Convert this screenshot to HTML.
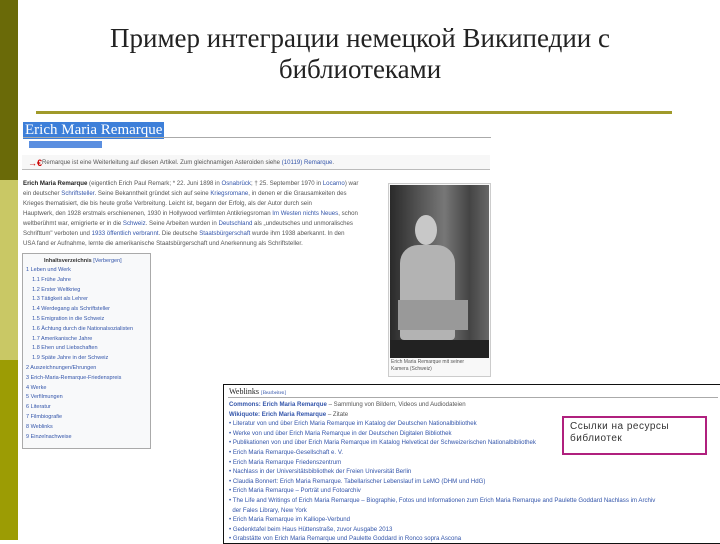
<!DOCTYPE html>
<html><head><meta charset="utf-8"><style>
*{margin:0;padding:0;box-sizing:border-box}
body{width:720px;height:540px;position:relative;background:#fff;overflow:hidden;font-family:"Liberation Sans",sans-serif}
.a{position:absolute}
.t{font-family:"Liberation Serif","Noto Serif CJK SC",serif;font-size:27px;color:#222;text-align:center;width:720px;left:0;line-height:31px}
.s{font-size:6.1px;color:#555;white-space:nowrap;line-height:10px}
.b{color:#3355aa}
.l{font-size:5.5px;color:#3355aa;white-space:nowrap;line-height:9.8px}
.w{font-size:6.1px;color:#3355aa;white-space:nowrap;line-height:9.6px}
</style></head><body>
<div class="a" style="left:0;top:0;width:18px;height:180px;background:#6a6a08"></div>
<div class="a" style="left:0;top:180px;width:18px;height:180px;background:#c9c865"></div>
<div class="a" style="left:0;top:360px;width:18px;height:180px;background:#9c9c04"></div>
<div class="a t" style="top:23px;left:0">Пример интеграции немецкой Википедии с<br>библиотеками</div>
<div class="a" style="left:36px;top:111px;width:636px;height:3px;background:#a09a2a"></div>

<div class="a" style="left:23px;top:122px;font-family:'Liberation Serif',serif;font-size:15px;color:#fff;background:#3d7fd9;padding:0 2px;line-height:17px">Erich Maria Remarque</div>
<div class="a" style="left:23px;top:137px;width:468px;height:1px;background:#aaa"></div>
<div class="a" style="left:29px;top:141px;width:73px;height:7px;background:#5b8fe0"></div>
<div class="a" style="left:22px;top:155px;width:468px;height:15px;background:#f7f7f7;border-bottom:1px solid #bbb"></div>
<div class="a" style="left:28px;top:160px;color:#c00;font-size:9px;line-height:7px;font-weight:bold">→€</div>
<div class="a s" style="left:42px;top:158px">Remarque ist eine Weiterleitung auf diesen Artikel. Zum gleichnamigen Asteroiden siehe <span class="b">(10119) Remarque</span>.</div>
<div class="a s" style="left:23px;top:179px">
<b style="color:#222">Erich Maria Remarque</b> (eigentlich Erich Paul Remark; * 22. Juni 1898 in <span class="b">Osnabrück</span>; † 25. September 1970 in <span class="b">Locarno</span>) war<br>
ein deutscher <span class="b">Schriftsteller</span>. Seine Bekanntheit gründet sich auf seine <span class="b">Kriegsromane</span>, in denen er die Grausamkeiten des<br>
Krieges thematisiert, die bis heute große Verbreitung. Leicht ist, begann der Erfolg, als der Autor durch sein<br>
Hauptwerk, den 1928 erstmals erschienenen, 1930 in Hollywood verfilmten Antikriegsroman <span class="b">Im Westen nichts Neues</span>, schon<br>
weltberühmt war, emigrierte er in die <span class="b">Schweiz</span>. Seine Arbeiten wurden in <span class="b">Deutschland</span> als „undeutsches und unmoralisches<br>
Schrifttum" verboten und <span class="b">1933 öffentlich verbrannt</span>. Die deutsche <span class="b">Staatsbürgerschaft</span> wurde ihm 1938 aberkannt. In den<br>
USA fand er Aufnahme, lernte die amerikanische Staatsbürgerschaft und Anerkennung als Schriftsteller.</div>

<div class="a" style="left:388px;top:183px;width:103px;height:194px;background:#f8f8f8;border:1px solid #ccc"></div>
<div class="a" style="left:390px;top:185px;width:99px;height:173px;background:linear-gradient(90deg,#2a2a2a,#555 30%,#777 55%,#444 80%,#666)"></div>
<div class="a" style="left:415px;top:215px;width:22px;height:30px;border-radius:50%;background:#c8c8c8"></div>
<div class="a" style="left:400px;top:245px;width:55px;height:95px;border-radius:18px 18px 4px 4px;background:#b3b3b3"></div>
<div class="a" style="left:398px;top:300px;width:70px;height:30px;background:#999"></div>
<div class="a" style="left:390px;top:340px;width:99px;height:18px;background:#222"></div>
<div class="a s" style="left:391px;top:359px;font-size:5px;line-height:7px">Erich Maria Remarque mit seiner<br>Kamera (Schweiz)</div>

<div class="a" style="left:22px;top:253px;width:129px;height:196px;background:#f8f9fa;border:1px solid #aaa"></div>
<div class="a s" style="left:44px;top:256px;font-weight:bold;color:#333;font-size:5.5px">Inhaltsverzeichnis <span class="b" style="font-weight:normal">[Verbergen]</span></div>
<div class="a l" style="left:26px;top:266px">1 Leben und Werk<br>&nbsp;&nbsp;&nbsp;&nbsp;1.1 Frühe Jahre<br>&nbsp;&nbsp;&nbsp;&nbsp;1.2 Erster Weltkrieg<br>&nbsp;&nbsp;&nbsp;&nbsp;1.3 Tätigkeit als Lehrer<br>&nbsp;&nbsp;&nbsp;&nbsp;1.4 Werdegang als Schriftsteller<br>&nbsp;&nbsp;&nbsp;&nbsp;1.5 Emigration in die Schweiz<br>&nbsp;&nbsp;&nbsp;&nbsp;1.6 Ächtung durch die Nationalsozialisten<br>&nbsp;&nbsp;&nbsp;&nbsp;1.7 Amerikanische Jahre<br>&nbsp;&nbsp;&nbsp;&nbsp;1.8 Ehen und Liebschaften<br>&nbsp;&nbsp;&nbsp;&nbsp;1.9 Späte Jahre in der Schweiz<br>2 Auszeichnungen/Ehrungen<br>3 Erich-Maria-Remarque-Friedenspreis<br>4 Werke<br>5 Verfilmungen<br>6 Literatur<br>7 Filmbiografie<br>8 Weblinks<br>9 Einzelnachweise</div>

<div class="a" style="left:223px;top:384px;width:500px;height:160px;border:1px solid #111;background:#fff"></div>
<div class="a" style="left:229px;top:387px;font-family:'Liberation Serif',serif;font-size:8px;color:#222">Weblinks <span style="font-size:5px;color:#3355aa">[Bearbeiten]</span></div>
<div class="a" style="left:228px;top:397px;width:490px;height:1px;background:#aaa"></div>
<div class="a w" style="left:229px;top:400px">
<b>Commons: Erich Maria Remarque</b> <span style="color:#555">– Sammlung von Bildern, Videos und Audiodateien</span><br>
<b>Wikiquote: Erich Maria Remarque</b> <span style="color:#555">– Zitate</span><br>
• Literatur von und über Erich Maria Remarque im Katalog der Deutschen Nationalbibliothek<br>
• Werke von und über Erich Maria Remarque in der Deutschen Digitalen Bibliothek<br>
• Publikationen von und über Erich Maria Remarque im Katalog Helveticat der Schweizerischen Nationalbibliothek<br>
• Erich Maria Remarque-Gesellschaft e. V.<br>
• Erich Maria Remarque Friedenszentrum<br>
• Nachlass in der Universitätsbibliothek der Freien Universität Berlin<br>
• Claudia Bonnert: Erich Maria Remarque. Tabellarischer Lebenslauf im LeMO (DHM und HdG)<br>
• Erich Maria Remarque – Porträt und Fotoarchiv<br>
• The Life and Writings of Erich Maria Remarque – Biographie, Fotos und Informationen zum Erich Maria Remarque and Paulette Goddard Nachlass im Archiv<br>
&nbsp;&nbsp;der Fales Library, New York<br>
• Erich Maria Remarque im Kalliope-Verbund<br>
• Gedenktafel beim Haus Hüttenstraße, zuvor Ausgabe 2013<br>
• Grabstätte von Erich Maria Remarque und Paulette Goddard in Ronco sopra Ascona</div>

<div class="a" style="left:562px;top:416px;width:145px;height:39px;border:2px solid #b0207e;background:#fff"></div>
<div class="a" style="left:570px;top:421px;font-size:10px;color:#333;line-height:12px;letter-spacing:0.5px">Ссылки на ресурсы<br>библиотек</div>
</body></html>
